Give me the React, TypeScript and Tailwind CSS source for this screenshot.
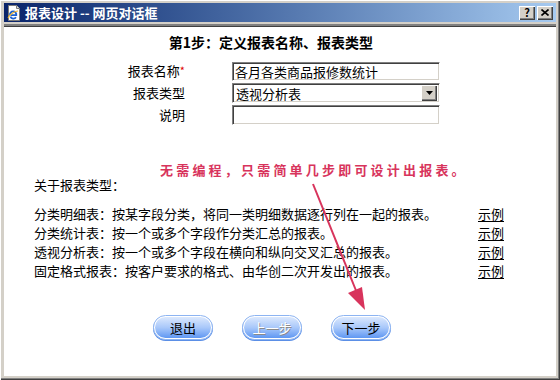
import React from 'react';

const types = [
  '分类明细表：按某字段分类，将同一类明细数据逐行列在一起的报表。',
  '分类统计表：按一个或多个字段作分类汇总的报表。',
  '透视分析表：按一个或多个字段在横向和纵向交叉汇总的报表。',
  '固定格式报表：按客户要求的格式、由华创二次开发出的报表。',
];

const inset =
  'border border-t-[#808080] border-l-[#808080] border-r-white border-b-white shadow-[inset_1px_1px_0_#404040,inset_-1px_-1px_0_#d4d0c8] bg-white';

const raised =
  'bg-[#d4d0c8] shadow-[inset_1px_1px_0_#fff,inset_-1px_-1px_0_#404040,inset_-2px_-2px_0_#808080]';

function PageIcon() {
  return (
    <svg width="16" height="16" viewBox="0 0 16 16">
      <path d="M2.5 0.5h8l3 3v12h-11z" fill="#fff" stroke="#7a7a7a" />
      <path d="M10.5 0.5v3h3" fill="#e0e0e0" stroke="#7a7a7a" />
      <path d="M4 10.2a3.2 3.2 0 1 1 6.3 0H4.6" fill="none" stroke="#1e64d2" strokeWidth="1.8" />
      <path d="M10 12.2a3.2 3.2 0 0 1 -5.6 -0.6" fill="none" stroke="#1e64d2" strokeWidth="1.8" />
      <path d="M2 13c2-4 7-7 10-7" fill="none" stroke="#f2b632" strokeWidth="1.2" />
    </svg>
  );
}

function PillButton({ label, disabled }: { label: string; disabled?: boolean }) {
  return (
    <div className="w-[60px] h-[25px] rounded-full border border-[#8db4f2] bg-white p-px shadow-[0_1px_0_#5b8fe6]">
      <div
        className={
          'h-full rounded-full bg-linear-to-b from-[#dbe8fd] via-[#a9c8fa] to-[#5f97f2] flex items-center justify-center text-[13px] ' +
          (disabled ? 'text-white [text-shadow:1px_1px_0_#8a8a8a]' : 'text-black')
        }
      >
        {label}
      </div>
    </div>
  );
}

export default function App() {
  return (
    <div
      className={
        'relative w-[560px] h-[380px] bg-[#d4d0c8] flex flex-col pt-[3px] px-[4px] pb-[4px] shadow-[inset_1px_1px_0_#fff,inset_-1px_-1px_0_#404040,inset_-2px_-2px_0_#808080] overflow-hidden'
      }
      style={{ fontFamily: "'Noto Sans CJK SC', 'Liberation Sans', sans-serif" }}
    >
      {/* title bar */}
      <div className="h-[19px] bg-linear-to-r from-[#0a246a] to-[#a6caf0] flex items-center pl-[2px] pr-[3px]">
        <PageIcon />
        <span className="ml-[3px] text-white font-bold text-[13px] leading-none">报表设计 -- 网页对话框</span>
        <div className="ml-auto flex gap-[2px]">
          <div className={raised + ' w-[16px] h-[14px] flex items-center justify-center text-[11px] font-bold leading-none text-black'}>?</div>
          <div className={raised + ' w-[16px] h-[14px] flex items-center justify-center'}>
            <svg width="8" height="7" viewBox="0 0 8 7">
              <path d="M0.5 0.5l7 6M7.5 0.5l-7 6" stroke="#000" strokeWidth="1.6" />
            </svg>
          </div>
        </div>
      </div>

      {/* content */}
      <div className="mt-[2px] flex-1 bg-white border-t-2 border-t-[#808080] shadow-[inset_0_1px_0_#404040] flex flex-col text-[13px] text-black">
        <div className="pt-[6px] text-center pr-[18px] text-[14px] font-bold leading-[20px]">
          第1步：定义报表名称、报表类型
        </div>

        <div className="mt-[8px] grid grid-cols-[181px_208px] gap-x-[47px]">
          <div className="h-[22px] flex items-center justify-end">
            报表名称<span className="text-[#e00000] text-[11px] self-start mt-[2px]">*</span>
          </div>
          <div className="h-[22px] flex items-center">
            <div className={inset + ' w-full h-[19px] flex items-center pl-[2px] leading-none'}>各月各类商品报修数统计</div>
          </div>

          <div className="h-[22px] flex items-center justify-end">报表类型</div>
          <div className="h-[22px] flex items-center">
            <div className={inset + ' w-full h-[20px] flex items-center pl-[3px] pr-[2px] leading-none'}>
              <span>透视分析表</span>
              <div className={raised + ' ml-auto w-[16px] h-[16px] flex items-center justify-center'}>
                <svg width="7" height="4" viewBox="0 0 7 4">
                  <path d="M0 0h7l-3.5 4z" fill="#000" />
                </svg>
              </div>
            </div>
          </div>

          <div className="h-[22px] flex items-center justify-end">说明</div>
          <div className="h-[22px] flex items-center">
            <div className={inset + ' w-full h-[20px]'} />
          </div>
        </div>

        <div className="mt-[49px] pl-[30px] leading-[19px]">关于报表类型：</div>

        <div className="mt-[10px] pl-[30px] w-[500px] flex flex-col leading-[19px]">
          {types.map((t) => (
            <div key={t} className="flex justify-between">
              <span>{t}</span>
              <span className="underline underline-offset-2">示例</span>
            </div>
          ))}
        </div>

        <div className="mt-[35px] pl-[149px] flex gap-[29px]">
          <PillButton label="退出" />
          <PillButton label="上一步" disabled />
          <PillButton label="下一步" />
        </div>
      </div>

      {/* annotation */}
      <div className="absolute left-[160px] top-[161px] text-[13px] font-bold tracking-[3.2px] leading-[18px] text-[#d8345c]">
        无需编程，只需简单几步即可设计出报表。
      </div>
      <svg className="absolute left-0 top-0 pointer-events-none" width="560" height="380" viewBox="0 0 560 380">
        <path d="M313 184L357 293" stroke="#d8345c" strokeWidth="2" />
        <path d="M365 310L348 293L362 287z" fill="#d8345c" />
      </svg>
    </div>
  );
}
